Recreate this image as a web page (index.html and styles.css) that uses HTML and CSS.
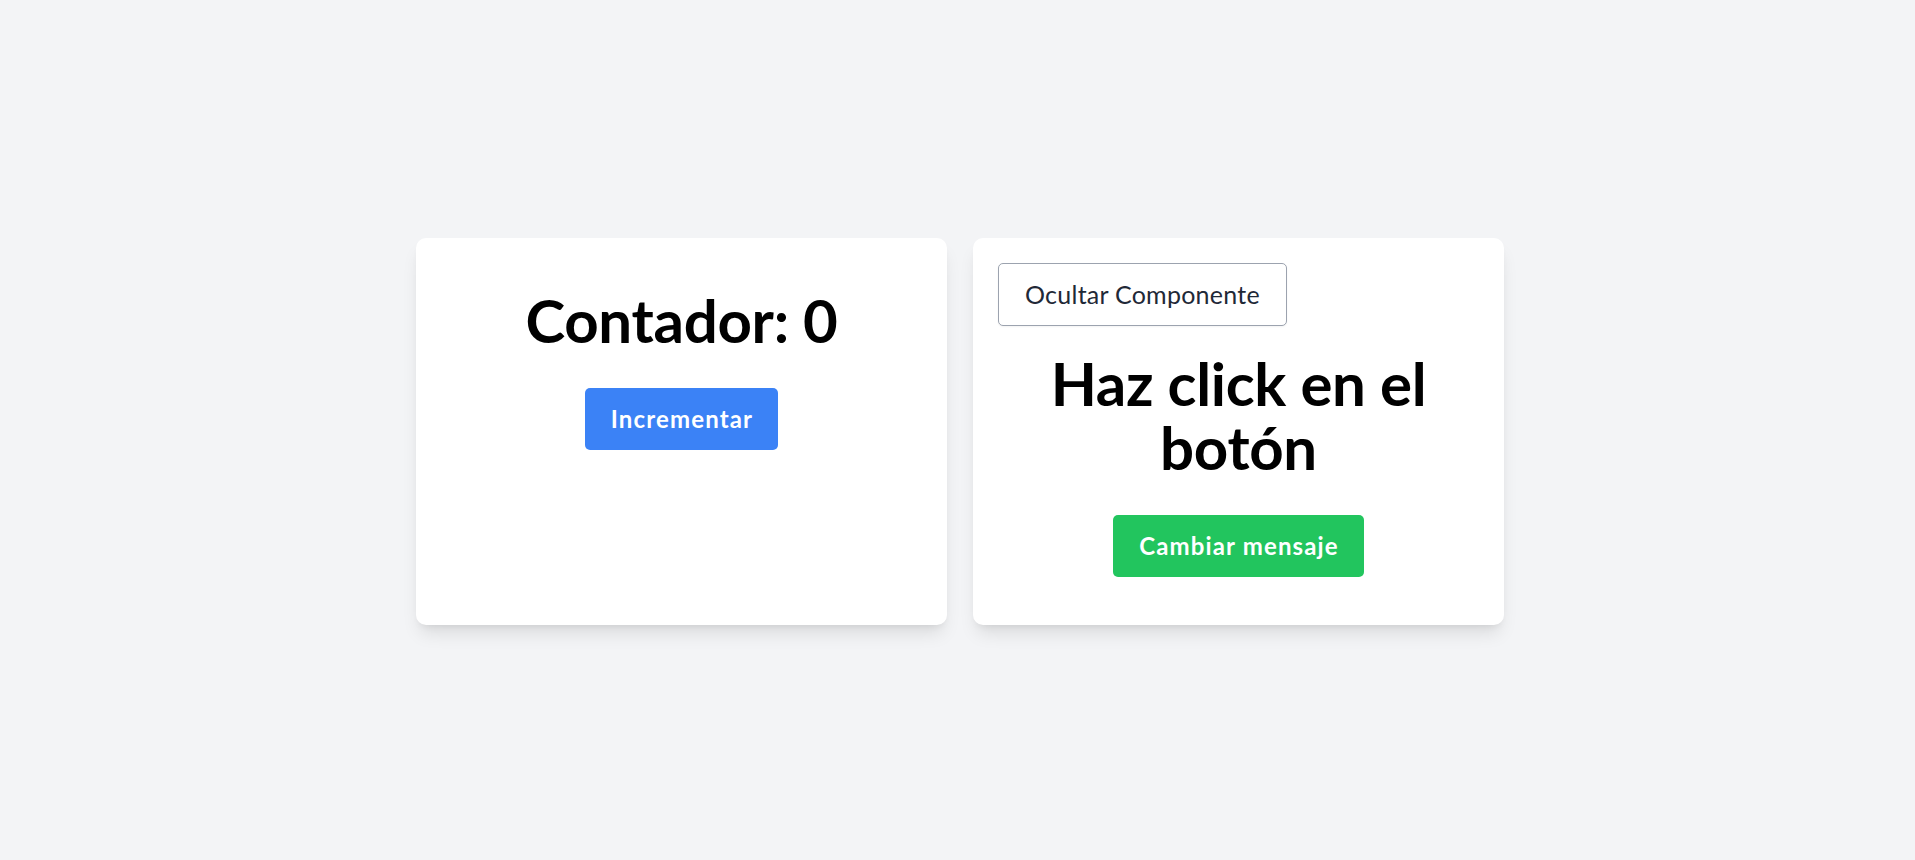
FILE: index.html
```html
<!DOCTYPE html>
<html lang="es">
<head>
<meta charset="utf-8">
<title>Contador</title>
<link rel="stylesheet" href="styles.css">
</head>
<body>
<main class="page">
  <div class="cards">
    <section class="card">
      <div class="content">
        <h1 class="title">Contador: 0</h1>
        <button class="btn btn-blue">Incrementar</button>
      </div>
    </section>
    <section class="card">
      <button class="btn-outline">Ocultar Componente</button>
      <div class="content">
        <h1 class="title">Haz click en el botón</h1>
        <button class="btn btn-green">Cambiar mensaje</button>
      </div>
    </section>
  </div>
</main>
</body>
</html>
```
FILE: styles.css
```css
* { box-sizing: border-box; }
html, body { margin: 0; padding: 0; }
body {
  background: #f3f4f6;
  font-family: "Lato", "Open Sans", sans-serif;
  color: #000;
}
.page {
  min-height: 100vh;
  padding: 2px 0 0 5px;
  display: flex;
  align-items: center;
  justify-content: center;
}
.cards {
  display: flex;
  gap: 26px;
  align-items: stretch;
}
.card {
  width: 531px;
  background: #fff;
  border-radius: 10px;
  padding: 25px;
  box-shadow: 0 12px 18px -4px rgba(0,0,0,0.1), 0 5px 8px -5px rgba(0,0,0,0.1);
  display: flex;
  flex-direction: column;
  align-items: flex-start;
}
.content {
  width: 100%;
  margin: 25px 0 23px;
  display: flex;
  flex-direction: column;
  align-items: center;
  text-align: center;
}
.title {
  margin: 0 0 36px;
  font-size: 60px;
  line-height: 64px;
  font-weight: 700;
  letter-spacing: -0.3px;
}
.btn {
  height: 62px;
  padding: 0 25px 0 26px;
  border: 0;
  border-radius: 5px;
  color: #fff;
  font-family: inherit;
  font-size: 24px;
  font-weight: 700;
  letter-spacing: 1.15px;
  cursor: pointer;
}
.btn-blue { background: #3b82f6; }
.btn-green { background: #22c55e; }
.btn-outline {
  height: 63px;
  padding: 0 26px;
  background: #fff;
  border: 1px solid #9ca3af;
  border-radius: 5px;
  box-shadow: 0 1px 2px rgba(0,0,0,0.05);
  color: #1f2937;
  font-family: inherit;
  font-size: 25px;
  font-weight: 400;
  letter-spacing: 0.25px;
  cursor: pointer;
}
```
